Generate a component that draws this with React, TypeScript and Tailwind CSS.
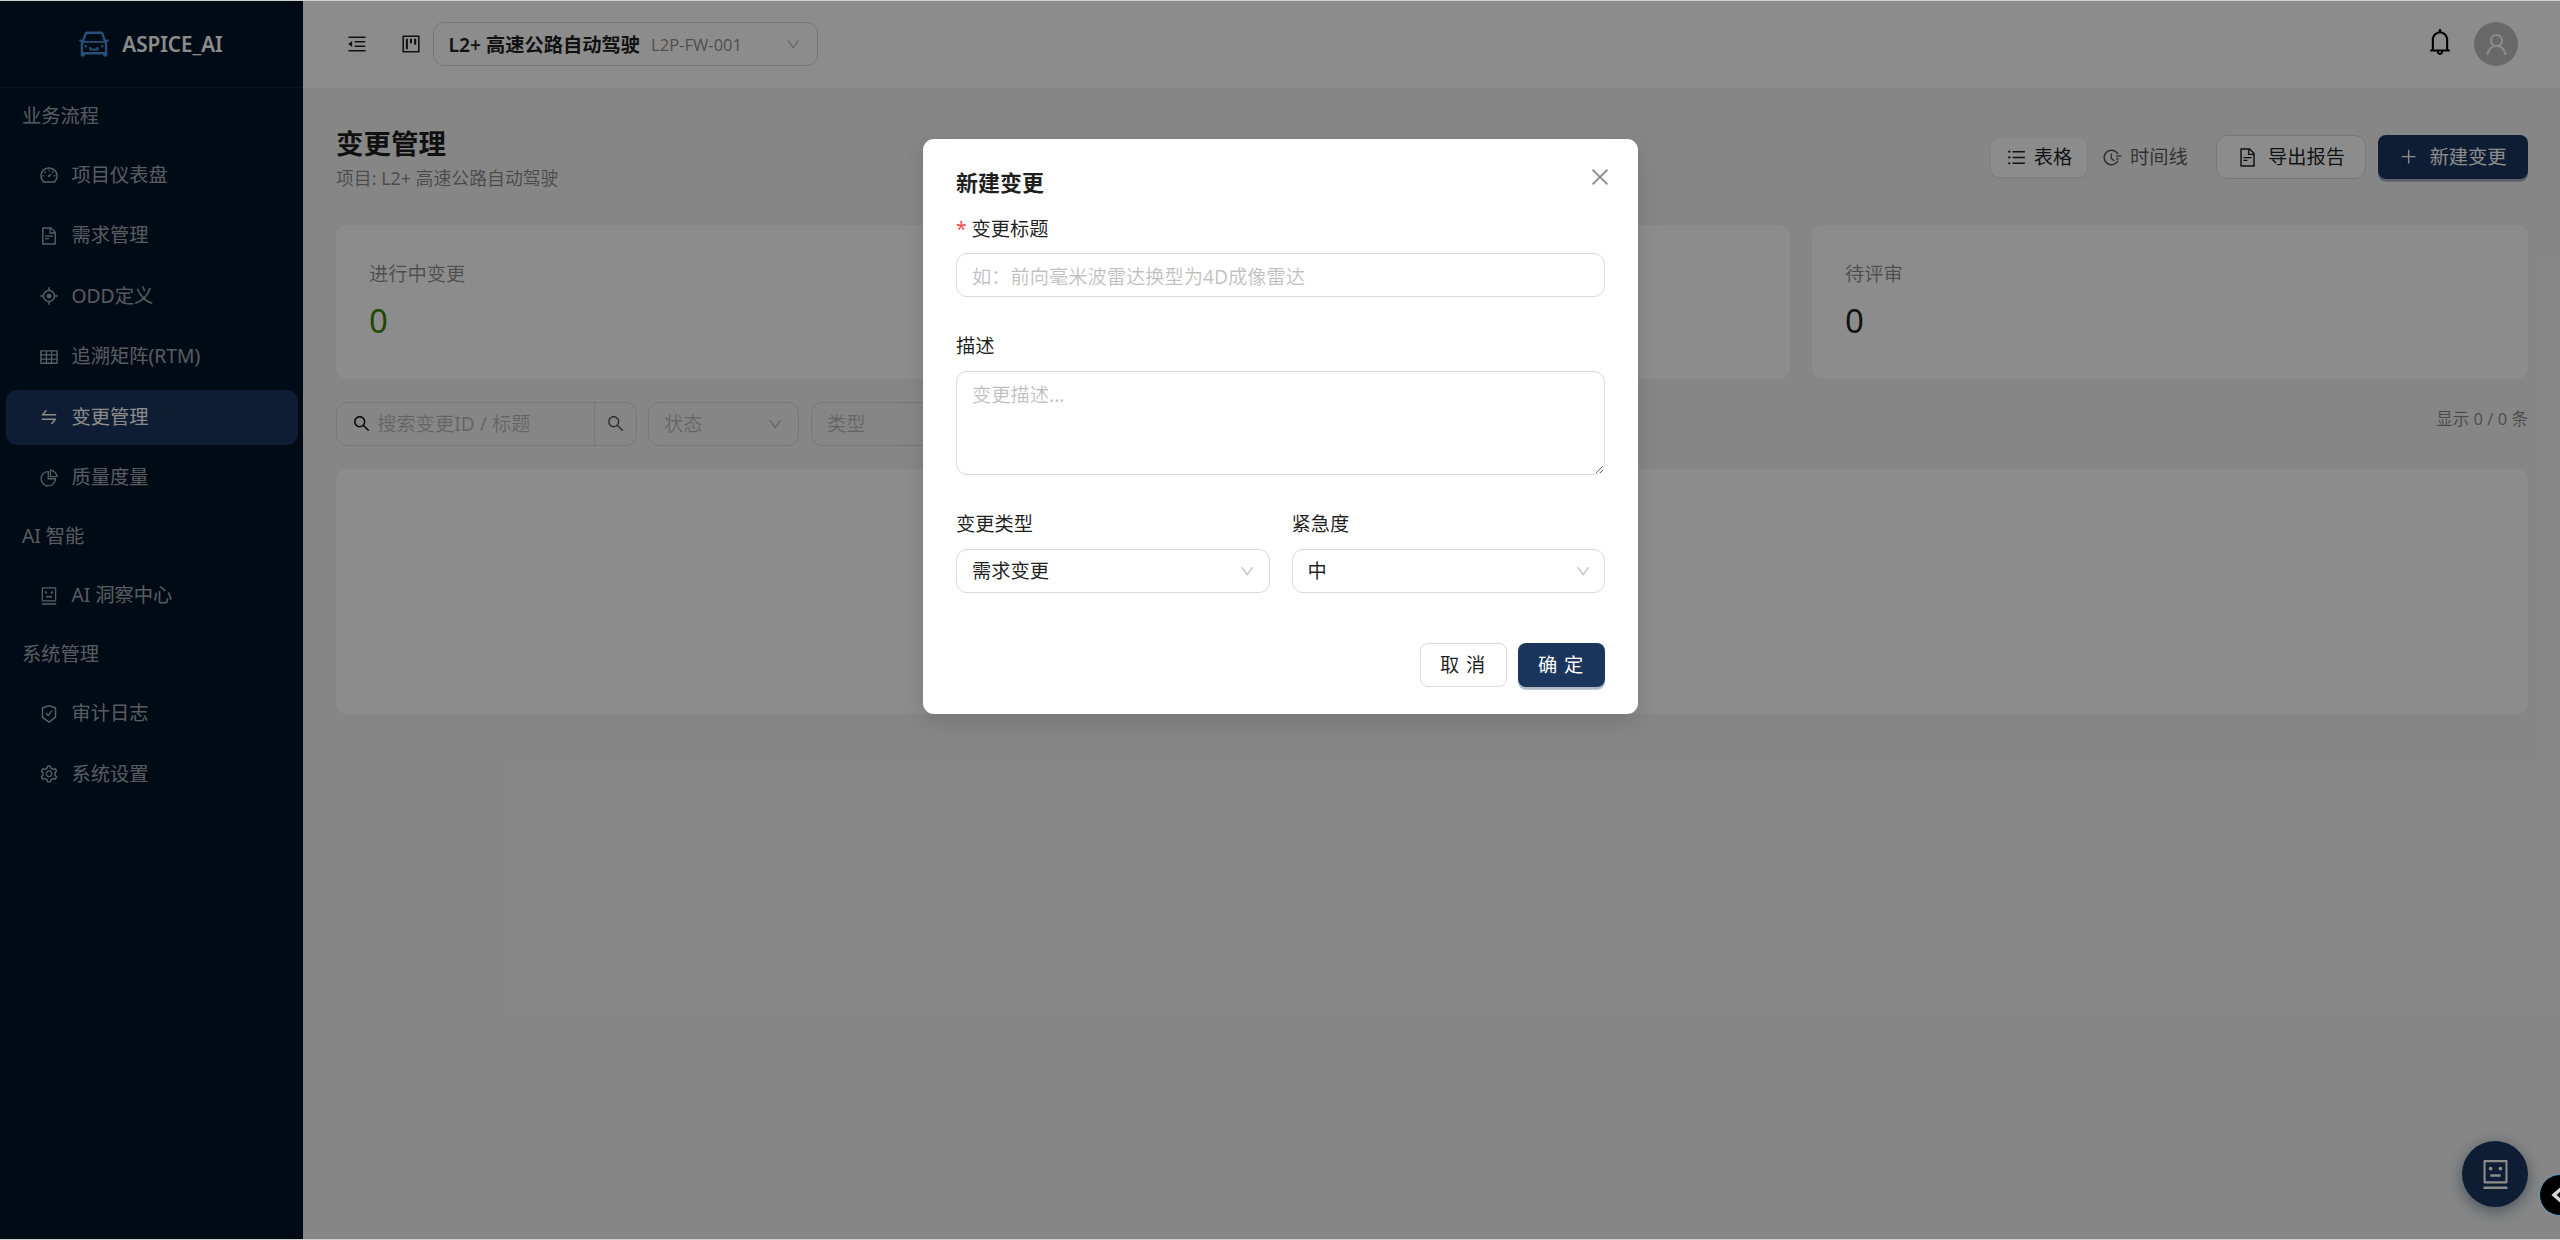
import React from "react";
import {
  AiOutlineDashboard, AiOutlineFileText, AiOutlineAim, AiOutlineTable, AiOutlineSwap, AiOutlinePieChart,
  AiOutlineRobot, AiOutlineSafetyCertificate, AiOutlineSetting, AiOutlineCar, AiOutlineMenuFold, AiOutlineProject,
  AiOutlineDown, AiOutlineBell, AiOutlineUser, AiOutlineUnorderedList, AiOutlineFieldTime, AiOutlinePlus,
  AiOutlineSearch, AiOutlineClose,
} from "react-icons/ai";

type Item = { icon: React.ComponentType<{ className?: string }>; label: string; active?: boolean };
const groups: { title: string; items: Item[] }[] = [
  {
    title: "业务流程",
    items: [
      { icon: AiOutlineDashboard, label: "项目仪表盘" },
      { icon: AiOutlineFileText, label: "需求管理" },
      { icon: AiOutlineAim, label: "ODD定义" },
      { icon: AiOutlineTable, label: "追溯矩阵(RTM)" },
      { icon: AiOutlineSwap, label: "变更管理", active: true },
      { icon: AiOutlinePieChart, label: "质量度量" },
    ],
  },
  { title: "AI 智能", items: [{ icon: AiOutlineRobot, label: "AI 洞察中心" }] },
  {
    title: "系统管理",
    items: [
      { icon: AiOutlineSafetyCertificate, label: "审计日志" },
      { icon: AiOutlineSetting, label: "系统设置" },
    ],
  },
];

function Sidebar() {
  return (
    <aside className="w-[303px] shrink-0 bg-[#001529] flex flex-col">
      <div className="h-[88px] shrink-0 flex items-center justify-center gap-[11px] pr-[3px] border-b border-[#ffffff12]">
        <AiOutlineCar className="text-[34px] text-[#4a90d9]" />
        <span className="pt-[1px] text-[20.625px] leading-none font-semibold text-white">ASPICE_AI</span>
      </div>
      <nav className="flex flex-col pt-[2px]">
        {groups.map((g) => (
          <div key={g.title} className="flex flex-col pb-[5.5px]">
            <div className="h-[52px] flex items-center px-[22px] text-[19.25px] text-[#ffffffa6]">{g.title}</div>
            {g.items.map((it) => {
              const Icon = it.icon;
              return (
                <div
                  key={it.label}
                  className={`h-[55px] mx-[5.5px] mt-[5.5px] pl-[33px] rounded-[11px] flex items-center gap-[13px] text-[19.25px] ${
                    it.active ? "bg-[#1a365d] text-white" : "text-[#ffffffa6]"
                  }`}
                >
                  <Icon className="text-[20px] shrink-0" />
                  <span>{it.label}</span>
                </div>
              );
            })}
          </div>
        ))}
      </nav>
    </aside>
  );
}

function Header() {
  return (
    <header className="h-[88px] shrink-0 bg-white shadow-[0_1.5px_6px_rgba(0,0,0,0.1)] flex items-center pl-[43px] pr-[42px]">
      <AiOutlineMenuFold className="text-[22px] text-[#1f1f1f] mr-[32px]" />
      <AiOutlineProject className="text-[22px] text-[#1f1f1f] mr-[10.5px]" />
      <div className="w-[385px] h-[44px] rounded-[11px] border border-[#d9d9d9] flex items-center pl-[15px] pr-[15px]">
        <span className="pt-[2px] text-[19.25px] font-semibold text-[#1f1f1f]">L2+ 高速公路自动驾驶</span>
        <span className="pt-[2px] ml-[11px] text-[16.5px] text-[#00000073]">L2P-FW-001</span>
        <AiOutlineDown className="ml-auto text-[16.5px] text-[#00000040]" />
      </div>
      <div className="ml-auto flex items-center gap-[19px]">
        <AiOutlineBell className="text-[30px] text-[#000000] -mt-[4px]" />
        <div className="w-[44px] h-[44px] rounded-full bg-[#00000040] flex items-center justify-center">
          <AiOutlineUser className="text-[27px] text-white" />
        </div>
      </div>
    </header>
  );
}

function Stat({ label, value, color }: { label: string; value: string; color: string }) {
  return (
    <div className="bg-white rounded-[11px] p-[33px] h-[154px] shadow-[0_1px_3px_rgba(0,0,0,0.02)]">
      <div className="h-[30px] leading-[32px] text-[19.25px] text-[#00000073] mb-[5.5px]">{label}</div>
      <div className={`h-[52px] leading-[54px] text-[33px] ${color}`}>{value}</div>
    </div>
  );
}

function Content() {
  return (
    <main className="flex-1 bg-[#f5f5f5] pl-[33px] pr-[32px] pt-[33px]">
      <div className="h-[104px] flex items-start justify-between">
        <div className="pt-[5px] flex flex-col">
          <h1 className="text-[27.5px] leading-[36px] font-bold text-[#000000e0]">变更管理</h1>
          <p className="text-[17.875px] leading-[27px] mt-[3px] text-[#00000073]">项目: L2+ 高速公路自动驾驶</p>
        </div>
        <div className="flex items-center mt-[14px]">
          <div className="h-[39px] w-[96px] rounded-[8px] bg-white shadow-[0_1px_3px_rgba(0,0,0,0.1)] flex items-center justify-center gap-[7px] text-[19.25px] text-[#000000e0]">
            <AiOutlineUnorderedList className="text-[21px]" />
            表格
          </div>
          <div className="w-[129px] h-[39px] flex items-center gap-[7px] pl-[15px] text-[19.25px] text-[#000000a6]">
            <AiOutlineFieldTime className="text-[21px]" />
            时间线
          </div>
          <button className="w-[150px] h-[44px] rounded-[11px] border border-[#d9d9d9] bg-white flex items-center justify-center gap-[10px] text-[19.25px] text-[#000000e0]">
            <AiOutlineFileText className="text-[21px]" />
            导出报告
          </button>
          <button className="ml-[12px] w-[150px] h-[44px] rounded-[8px] bg-[#1a365d] text-white shadow-[0_2.75px_0_rgba(26,54,93,0.35)] flex items-center justify-center gap-[11px] text-[19.25px]">
            <AiOutlinePlus className="text-[19.25px]" />
            新建变更
          </button>
        </div>
      </div>

      <div className="grid grid-cols-3 gap-[22px]">
        <Stat label="进行中变更" value="0" color="text-[#3f8600]" />
        <Stat label="已完成变更" value="0" color="text-[#000000e0]" />
        <Stat label="待评审" value="0" color="text-[#000000e0]" />
      </div>

      <div className="mt-[23px] h-[44px] flex items-start">
        <div className="w-[259px] h-[44px] rounded-l-[11px] border border-[#d9d9d9] flex items-center pl-[15px]">
          <AiOutlineSearch className="text-[19.25px] text-[#000000] mr-[6px]" />
          <span className="text-[19.25px] text-[#00000040]">搜索变更ID / 标题</span>
        </div>
        <div className="w-[43px] h-[44px] -ml-px rounded-r-[11px] border border-[#d9d9d9] flex items-center justify-center">
          <AiOutlineSearch className="text-[19.25px] text-[#000000a6]" />
        </div>
        <div className="ml-[11px] w-[151px] h-[44px] rounded-[11px] border border-[#d9d9d9] flex items-center px-[15px] text-[19.25px] text-[#00000040]">
          状态
          <AiOutlineDown className="ml-auto text-[16.5px]" />
        </div>
        <div className="ml-[12px] w-[151px] h-[44px] rounded-[11px] border border-[#d9d9d9] flex items-center px-[15px] text-[19.25px] text-[#00000040]">
          类型
          <AiOutlineDown className="ml-auto text-[16.5px]" />
        </div>
        <span className="ml-auto mt-[4px] text-[16.5px] leading-[26px] text-[#00000073]">显示 0 / 0 条</span>
      </div>

      <div className="mt-[23px] h-[245px] rounded-[11px] bg-white" />
    </main>
  );
}

function Label({ children, required, mb }: { children: React.ReactNode; required?: boolean; mb: string }) {
  return (
    <div className={`h-[30px] leading-[30px] text-[19.25px] text-[#000000e0] ${mb}`}>
      {required && <span className="text-[#ff4d4f] mr-[5px] text-[19.25px]">*</span>}
      {children}
    </div>
  );
}

function Field({ value }: { value: string }) {
  return (
    <div className="h-[44px] rounded-[11px] border border-[#d9d9d9] flex items-center pl-[15px] pr-[13px] text-[19.25px] text-[#000000e0]">
      {value}
      <AiOutlineDown className="ml-auto text-[16.5px] text-[#00000040]" />
    </div>
  );
}

function Modal() {
  return (
    <div className="absolute inset-0 bg-[#00000073] flex justify-center items-start pt-[139px] pl-[1px]">
      <div className="relative w-[715px] h-[575px] bg-white rounded-[11px] shadow-[0_8px_22px_rgba(0,0,0,0.12)] px-[33px] pt-[28px] flex flex-col">
        <AiOutlineClose className="absolute top-[26px] right-[26px] text-[24px] text-[#00000073]" />
        <h2 className="text-[22px] leading-[30px] font-semibold text-[#000000e0] mb-[17px]">新建变更</h2>
        <Label required mb="mb-[9px]">变更标题</Label>
        <input
          placeholder="如：前向毫米波雷达换型为4D成像雷达"
          className="h-[44px] rounded-[11px] border border-[#d9d9d9] px-[15px] pt-[2px] text-[19.25px] outline-none placeholder:text-[#00000040]"
        />
        <div className="h-[34px]" />
        <Label mb="mb-[10px]">描述</Label>
        <textarea
          placeholder="变更描述..."
          className="h-[104px] rounded-[11px] border border-[#d9d9d9] px-[15px] py-[8.5px] text-[19.25px] outline-none resize-y placeholder:text-[#00000040]"
        />
        <div className="h-[34px]" />
        <div className="grid grid-cols-2 gap-[22px]">
          <div>
            <Label mb="mb-[10px]">变更类型</Label>
            <Field value="需求变更" />
          </div>
          <div>
            <Label mb="mb-[10px]">紧急度</Label>
            <Field value="中" />
          </div>
        </div>
        <div className="mt-[50px] flex justify-end gap-[11px]">
          <button className="w-[87px] h-[44px] rounded-[8px] border border-[#d9d9d9] bg-white text-[19.25px] tracking-[0.34em] indent-[0.25em] text-[#000000e0]">取消</button>
          <button className="w-[87px] h-[44px] rounded-[8px] bg-[#1a365d] text-white shadow-[0_2.75px_0_rgba(26,54,93,0.35)] text-[19.25px] tracking-[0.34em] indent-[0.25em]">确定</button>
        </div>
      </div>
    </div>
  );
}

export default function App() {
  return (
    <div className="relative w-[2560px] h-[1240px] overflow-hidden flex font-['Noto_Sans','Noto_Sans_CJK_SC',sans-serif]">
      <Sidebar />
      <div className="flex-1 flex flex-col">
        <Header />
        <Content />
      </div>
      <div className="absolute right-[32px] bottom-[33px] w-[66px] h-[66px] rounded-full bg-[#1a365d] shadow-[0_4px_16px_rgba(26,54,93,0.5)] flex items-center justify-center">
        <AiOutlineRobot className="text-[33px] text-white" />
      </div>
      <Modal />
      <div className="absolute -right-[22px] bottom-[24px] w-[43px] h-[42px] rounded-full bg-black border border-[#5aa0c8] flex items-center pl-[11px]">
        <svg width="14" height="18" viewBox="0 0 14 18" fill="none" stroke="#d8d8d8" strokeWidth="3.5"><path d="M11 2 L3 9 L11 16" /></svg>
      </div>
      <div className="absolute left-0 right-0 top-0 h-px bg-[#d0d0d0]" />
      <div className="absolute left-0 right-0 bottom-0 h-px bg-[#d0d0d0]" />
    </div>
  );
}
